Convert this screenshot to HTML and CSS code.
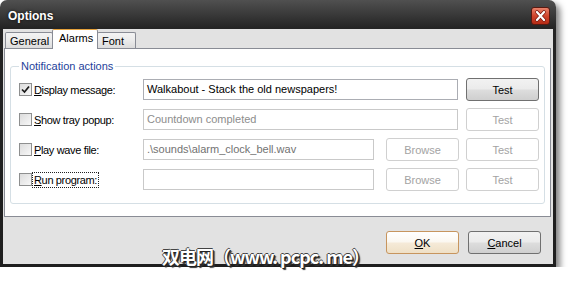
FILE: index.html
```html
<!DOCTYPE html>
<html lang="en">
<head>
    <meta charset="UTF-8">
    <title>Options</title>
    <link rel="stylesheet" href="styles.css">
</head>
<body>
    <div class="window">
        <div class="titlebar">
            <span class="title">Options</span>
            <span class="close">
                <svg width="19" height="18" viewBox="0 0 19 18">
                    <path d="M5.5 4.5 L13.5 13.5 M13.5 4.5 L5.5 13.5" stroke="#7a1a10" stroke-width="4" stroke-linecap="round"/>
                    <path d="M5.5 4.5 L13.5 13.5 M13.5 4.5 L5.5 13.5" stroke="#fff" stroke-width="2.4" stroke-linecap="round"/>
                </svg>
            </span>
        </div>
        <div class="client">
            <div class="tabs">
                <div class="tab tab-general">General</div>
                <div class="tab tab-alarms active">Alarms</div>
                <div class="tab tab-font">Font</div>
            </div>
            <div class="panel">
                <fieldset class="group">
                    <legend>Notification actions</legend>

                    <div class="row">
                        <label class="opt">
                            <span class="box">
                                <svg width="11" height="11" viewBox="0 0 11 11"><path d="M2 5.5 L4.5 8 L9 2.5" fill="none" stroke="#1a1a1a" stroke-width="1.7"/></svg>
                            </span>
                            <span class="lbl"><u>D</u>isplay message:</span>
                        </label>
                        <div class="field wide">Walkabout - Stack the old newspapers!</div>
                        <button class="btn test">Test</button>
                    </div>

                    <div class="row">
                        <label class="opt">
                            <span class="box"></span>
                            <span class="lbl"><u>S</u>how tray popup:</span>
                        </label>
                        <div class="field wide off">Countdown completed</div>
                        <button class="btn test" disabled>Test</button>
                    </div>

                    <div class="row">
                        <label class="opt">
                            <span class="box"></span>
                            <span class="lbl"><u>P</u>lay wave file:</span>
                        </label>
                        <div class="field narrow off dim">.\sounds\alarm_clock_bell.wav</div>
                        <button class="btn browse" disabled>Browse</button>
                        <button class="btn test" disabled>Test</button>
                    </div>

                    <div class="row">
                        <label class="opt">
                            <span class="box"></span>
                            <span class="lbl focus"><u>R</u>un program:</span>
                        </label>
                        <div class="field narrow off"></div>
                        <button class="btn browse" disabled>Browse</button>
                        <button class="btn test" disabled>Test</button>
                    </div>
                </fieldset>
            </div>
            <div class="footer">
                <button class="btn ok"><u>O</u>K</button>
                <button class="btn"><u>C</u>ancel</button>
            </div>
        </div>
    </div>
    <div class="watermark">双电网（www. pcpc. me）</div>
</body>
</html>
```

FILE: styles.css
```css
body{
    margin:0;
    background:#fff;
    font-family:"Liberation Sans", Arial, sans-serif;
    font-size:11px;
    color:#000;
}
.window{
    width:550px;
    height:264px;
    padding:0 3px 3px;
    display:flex;
    flex-direction:column;
    background:linear-gradient(#505050, #242424 28px, #1e1e1e);
    border-radius:7px 7px 0 0;
    box-shadow:4px 4px 6px rgba(0,0,0,.5);
}
.titlebar{
    height:29px;
    flex:none;
    display:flex;
    align-items:center;
    justify-content:space-between;
    padding:3px 3px 0 5px;
    box-sizing:border-box;
}
.title{
    color:#fff;
    font-weight:bold;
    font-size:12px;
    text-shadow:0 0 3px rgba(0,0,0,.8);
}
.close{
    width:19px;
    height:18px;
    border-radius:3px;
    border:1px solid #5a1a10;
    box-sizing:border-box;
    background:linear-gradient(#e9826b, #d0442c 50%, #b52b15);
    display:flex;
    align-items:center;
    justify-content:center;
}
.close svg{ display:block; }
.client{
    flex:1;
    background:#e2e2e2;
    display:flex;
    flex-direction:column;
}

/* tabs */
.tabs{
    height:19px;
    flex:none;
    display:flex;
    align-items:flex-end;
    padding-left:2px;
    position:relative;
    z-index:1;
}
.tab{
    height:16px;
    box-sizing:border-box;
    border:1px solid #898c95;
    border-bottom:none;
    border-radius:2px 2px 0 0;
    background:linear-gradient(#f3f3f3, #ebebeb 50%, #dcdcdc);
    padding:2px 0 0 4px;
    font-size:11px;
}
.tab-general{ width:48px; }
.tab-alarms{ width:46px; margin-left:-1px; }
.tab-font{ width:39px; margin-left:-1px; }
.tab.active{
    height:20px;
    margin-bottom:-1px;
    background:#fff;
    border-top:1px solid #e6a23c;
    padding:2px 0 0 6px;
}

/* panel */
.panel{
    height:169px;
    box-sizing:border-box;
    margin:0 2px 0 1px;
    border:1px solid #898c95;
    background:#fff;
    padding:11px 5px 0;
}
.group{
    margin:0;
    border:1px solid #d5dfe5;
    border-radius:3px;
    padding:6px 0 5px 8px;
}
.group legend{
    color:#1e3f9a;
    padding:0 2px;
    margin-left:0;
    font-size:11px;
}
.row{
    display:flex;
    align-items:center;
    height:23px;
    margin-bottom:7px;
}
.opt{
    width:124px;
    display:flex;
    align-items:center;
    flex:none;
}
.box{
    width:13px;
    height:13px;
    box-sizing:border-box;
    border:1px solid #8e8f8f;
    background:linear-gradient(135deg, #dcdcdc, #f8f8f8);
    display:flex;
    align-items:center;
    justify-content:center;
}
.box svg{ display:block; }
.lbl{
    padding:1px 1px;
    border:1px dotted transparent;
    letter-spacing:-0.35px;
}
.lbl.focus{ border-color:#222; }
.field{
    height:21px;
    box-sizing:border-box;
    border:1px solid #abadb3;
    padding:3px 3px 0;
    font-size:11px;
    white-space:nowrap;
    overflow:hidden;
}
.field.wide{ width:315px; }
.field.narrow{ width:231px; }
.field.off{
    border-color:#c9c9c9;
    color:#8d8d8d;
}
.field.dim{ color:#727272; }
.btn{
    height:23px;
    width:73px;
    box-sizing:border-box;
    border:1px solid #707070;
    border-radius:3px;
    background:linear-gradient(#f2f2f2, #ebebeb 48%, #dddddd 52%, #cfcfcf);
    font-family:"Liberation Sans", Arial, sans-serif;
    font-size:11px;
    color:#000;
    padding:0;
}
.btn:disabled{
    border-color:#d0d0d0;
    background:#fff;
    color:#a3a3a3;
}
.btn.test{ margin-left:8px; }
.browse{ margin-left:12px; }
.browse + .btn.test{ margin-left:7px; }

/* footer */
.footer{
    display:flex;
    justify-content:flex-end;
    padding:14px 12px 0 0;
    gap:9px;
}
.btn.ok{
    border-color:#c7955e;
    background:linear-gradient(#ffffff, #fbf7f0 48%, #f5ead8 52%, #efe0c6);
}
.watermark{
    position:absolute;
    left:162px;
    top:246px;
    font-family:"Noto Sans CJK SC", "Liberation Sans", sans-serif;
    font-weight:bold;
    font-size:18px;
    line-height:20px;
    color:#fff;
    letter-spacing:-1px;
    text-shadow:1px 1px 0 #222, -1px 0 0 #444, 0 -1px 0 #444, 2px 2px 1px #333;
}
```
